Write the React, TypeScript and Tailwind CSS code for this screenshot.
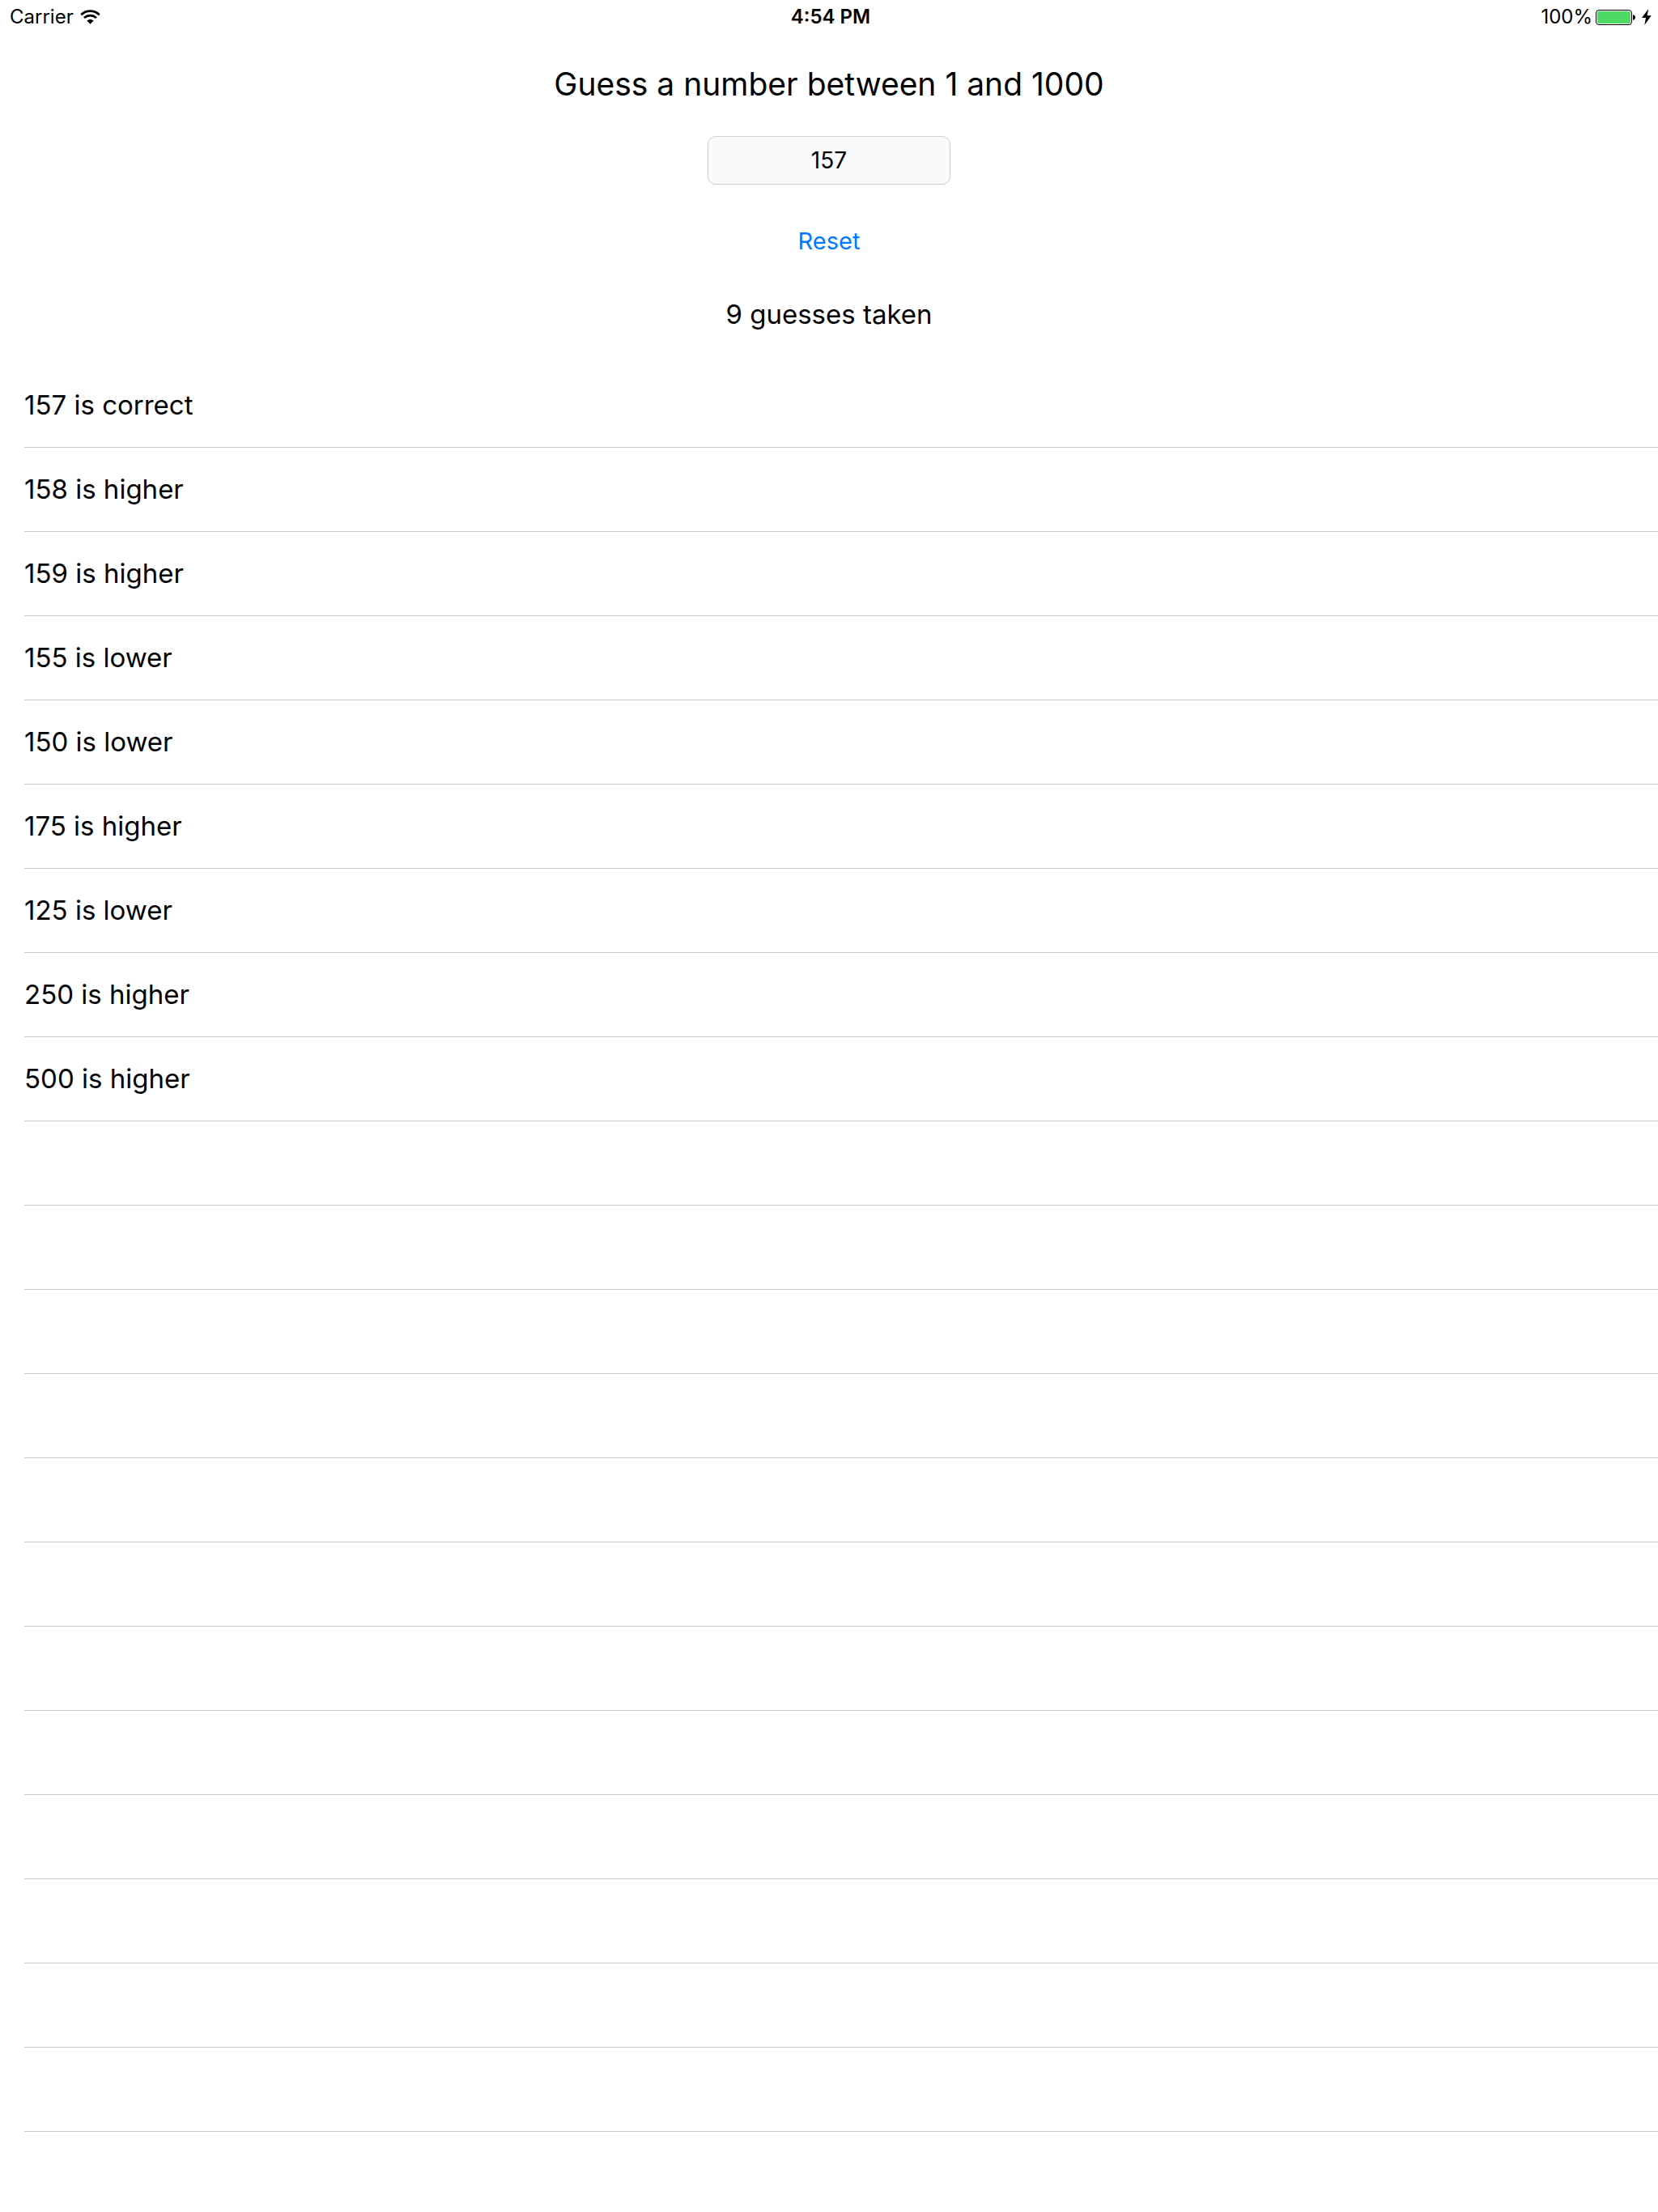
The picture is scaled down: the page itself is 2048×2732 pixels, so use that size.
import { useState } from "react";

const ROW_COUNT = 21;

const initialGuesses = [
  "157 is correct",
  "158 is higher",
  "159 is higher",
  "155 is lower",
  "150 is lower",
  "175 is higher",
  "125 is lower",
  "250 is higher",
  "500 is higher",
];

function WifiIcon() {
  return (
    <svg width="25" height="18" viewBox="0 0 26 18" aria-hidden="true">
      <g fill="none" stroke="#000" strokeWidth="2.8">
        <path d="M1.3 6.2C4.4 3.1 8.5 1.4 13 1.4s8.6 1.7 11.7 4.8" />
        <path d="M5.2 10.2C7.3 8.1 10 7 13 7s5.7 1.1 7.8 3.2" />
      </g>
      <path d="M13 18 8.7 13.7C9.9 12.6 11.4 12 13 12s3.1.6 4.3 1.7z" />
    </svg>
  );
}

function BatteryIcon() {
  return (
    <svg width="49" height="19" viewBox="0 0 49 19" aria-hidden="true">
      <rect
        x="0.5"
        y="0.5"
        width="44"
        height="18"
        rx="3.5"
        fill="#fff"
        stroke="#000"
      />
      <rect x="2" y="2" width="41" height="15" rx="2" fill="#4cd964" />
      <path d="M46 6.2c1.8.3 3 1.6 3 3.300s-1.200 3-3 3.300z" />
    </svg>
  );
}

function BoltIcon() {
  return (
    <svg width="12" height="20" viewBox="0 0 12 20" aria-hidden="true">
      <path d="M8.300 0 0 11h5L3.300 20 11.800 8.300H6.600z" />
    </svg>
  );
}

function StatusBar() {
  return (
    <header className="grid h-10 grid-cols-[1fr_auto_1fr] items-center pl-3 pr-2 pt-0.5 text-2xl">
      <div className="flex items-center gap-2">
        <span>Carrier</span>
        <WifiIcon />
      </div>
      <span className="font-semibold">4:54 PM</span>
      <div className="flex items-center justify-end">
        <span className="mr-1">100%</span>
        <BatteryIcon />
        <span className="ml-2">
          <BoltIcon />
        </span>
      </div>
    </header>
  );
}

export default function App() {
  const [value, setValue] = useState("157");
  const [guesses, setGuesses] = useState(initialGuesses);

  const reset = () => {
    setValue("");
    setGuesses([]);
  };

  const emptyRows = Math.max(ROW_COUNT - guesses.length, 0);

  return (
    <div className="min-h-screen bg-white font-['Inter',sans-serif] text-black">
      <StatusBar />
      <main>
        <div className="flex flex-col items-center gap-10 pt-10">
          <label htmlFor="guess" className="text-[39px] leading-12">
            Guess a number between 1 and 1000
          </label>
          <input
            id="guess"
            type="text"
            inputMode="numeric"
            value={value}
            onChange={(e) => setValue(e.target.value)}
            className="h-15 w-75 rounded-[10px] border border-[#cdcdcd] bg-[#fafafa] text-center text-[28px] outline-none"
          />
          <button
            type="button"
            onClick={reset}
            className="h-15 text-[29px] text-[#007aff]"
          >
            Reset
          </button>
          <p className="text-[33px] leading-10">
            {guesses.length} guesses taken
          </p>
        </div>
        <ul className="mt-10 pl-7.5 pt-px text-[33px]">
          {guesses.map((guess) => (
            <li
              key={guess}
              className="flex h-26 items-center border-b border-[#c8c7cc]"
            >
              {guess}
            </li>
          ))}
          {Array.from({ length: emptyRows }, (_, i) => (
            <li
              key={i}
              aria-hidden="true"
              className="h-26 border-b border-[#c8c7cc]"
            />
          ))}
        </ul>
      </main>
    </div>
  );
}
